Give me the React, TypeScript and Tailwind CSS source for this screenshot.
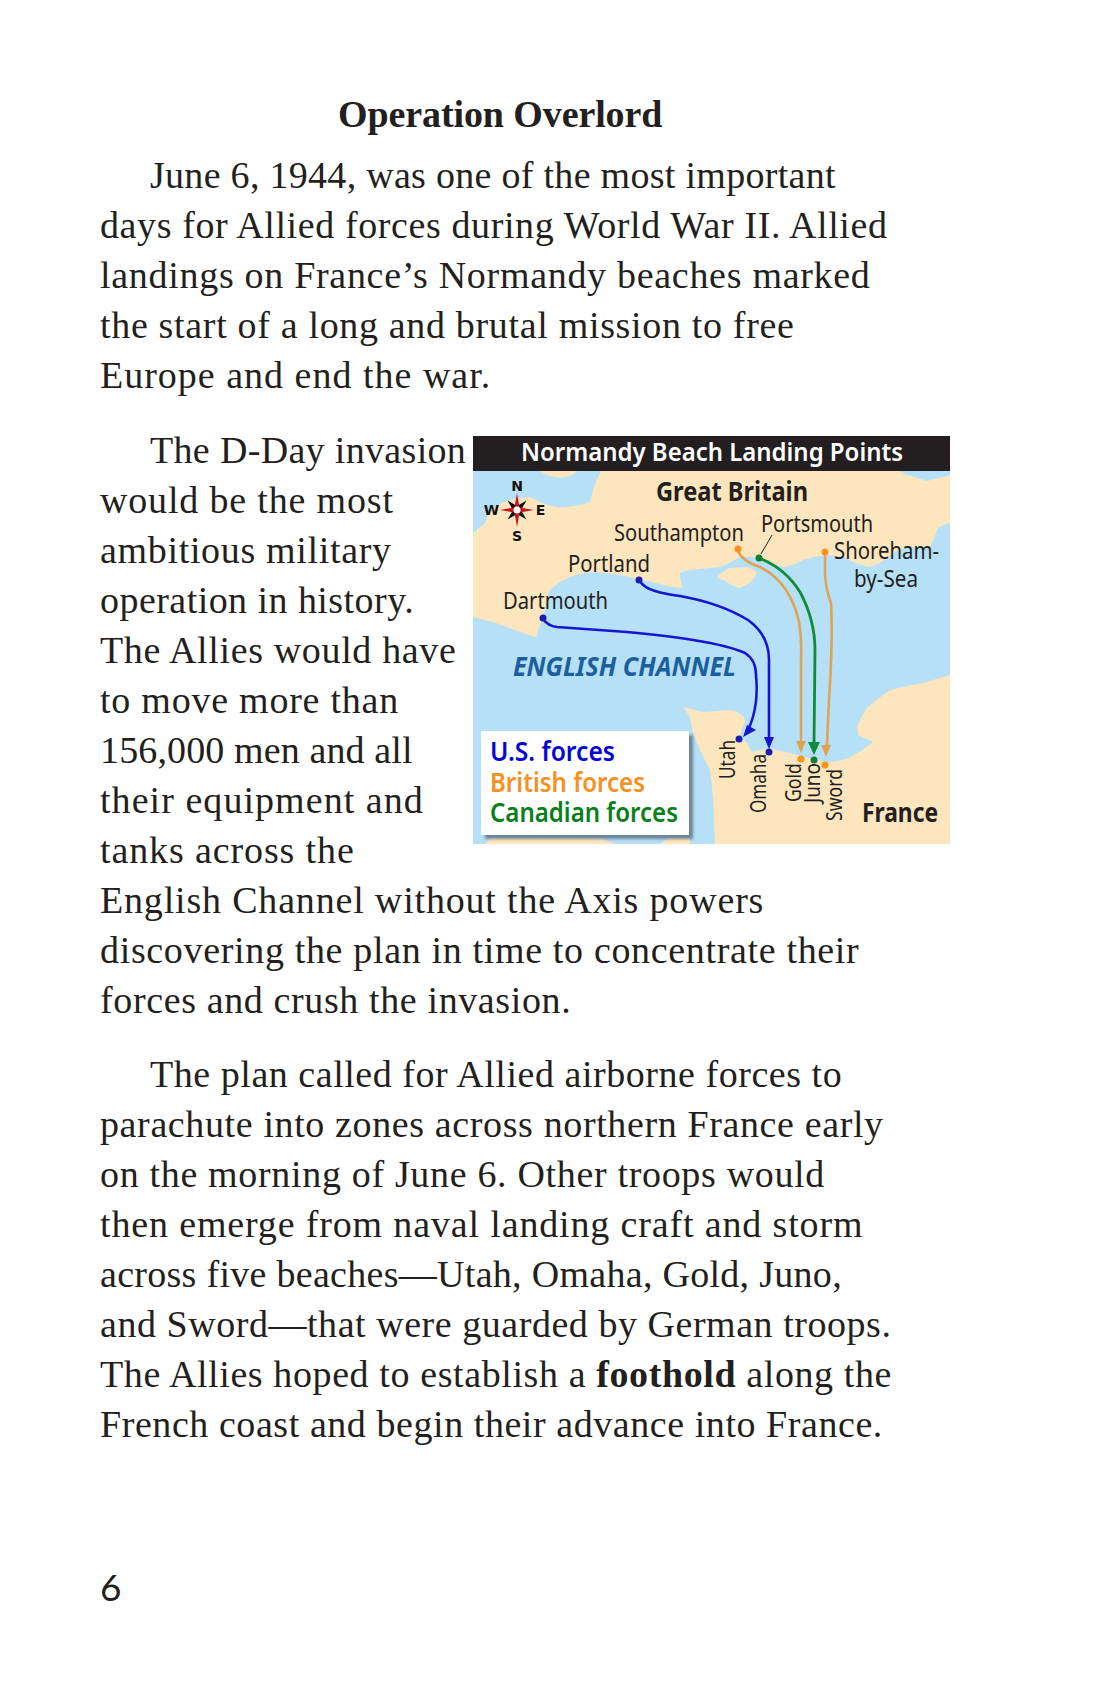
import React from "react";

const L = ({ children, c = "" }: { children: React.ReactNode; c?: string }) => (
  <div className={"whitespace-nowrap " + c}>{children}</div>
);

const sans = "'Noto Sans', sans-serif";

function T({ x, y, w, s, t, f = "#231f20", b = 400, i = false, r = false }: { x: number; y: number; w: number; s: number; t: string; f?: string; b?: number; i?: boolean; r?: boolean }) {
  return (
    <text
      x={r ? 0 : x}
      y={r ? 0 : y}
      transform={r ? `translate(${x} ${y}) rotate(-90)` : undefined}
      fontFamily={sans}
      fontSize={s}
      fontWeight={b}
      fontStyle={i ? "italic" : "normal"}
      fill={f}
      textLength={w}
      lengthAdjust="spacingAndGlyphs"
    >
      {t}
    </text>
  );
}

function Route({ d, c, w = 2.6 }: { d: string; c: string; w?: number }) {
  return <path d={d} fill="none" stroke={c} strokeWidth={w} strokeLinecap="round" />;
}

function MapFigure() {
  const land = "#fde5bd";
  const sea = "#b5e0f7";
  const blue = "#1616d0";
  const orange = "#dfa354";
  const green = "#118a3a";
  return (
    <svg width="477" height="408" viewBox="473 436 477 408" className="block shrink-0">
      <defs>
        <filter id="soft" x="-10%" y="-10%" width="120%" height="120%">
          <feGaussianBlur stdDeviation="0.6" />
        </filter>
        <filter id="sh" x="-10%" y="-10%" width="120%" height="120%">
          <feGaussianBlur stdDeviation="1.6" />
        </filter>
      </defs>
      <rect x="473" y="436" width="477" height="408" fill={sea} />
      <g filter="url(#soft)">
        <path
          fill={land}
          d="M473 533 L485 523 Q488 513 494 508 Q502 502 512 500 Q522 497 530 497 Q545 505 556 507 Q575 508 590 502 Q592 496 593 490 Q596 480 601 471 L900 471 L905 474 L927 481 L950 475 L950 523 Q940 525 937 530 Q934 540 930 547 Q912 546 897 550 Q885 562 870 567 Q855 564 843 557 L827 555 Q815 556 803 560 Q793 566 783 567 Q770 563 760 558 Q750 556 740 557 Q730 563 720 567 L700 569 Q684 570 680 573 Q680 582 683 588 Q668 587 656 583 Q648 581 640 580 Q630 577 620 575 Q605 572 590 572 Q580 573 570 577 Q558 582 550 590 Q546 600 545 610 Q540 625 536 637 Q530 636 523 633 L493 622 L473 617 Z"
        />
        <path fill={land} d="M717 577 Q724 570 730 568 L747 567 Q754 569 757 573 L753 580 Q747 585 740 588 Q732 586 727 582 Z" />
        <path fill={land} d="M540 471 L577 471 Q572 477 560 478 Q548 477 540 471 Z" />
        <path
          fill={land}
          d="M683 707 L703 712 L730 710 Q738 711 743 716 Q745 720 745 722 Q741 730 740 737 L747 743 Q749 748 752 752 Q760 750 770 748 L797 755 L827 762 Q840 762 850 757 Q862 751 873 742 Q865 738 858 735 L857 728 Q860 718 867 708 Q878 698 890 690 Q905 686 923 683 L950 675 L950 844 L715 844 L713 797 L710 770 L700 750 L693 733 L690 717 Z"
        />
        <path fill={land} d="M485 844 L490 838 L600 838 L615 844 Z" />
        <path fill={land} d="M660 844 L668 838 L690 838 L690 844 Z" />
      </g>

      <rect x="473" y="436" width="477" height="35" fill="#231f20" />
      <T x={521} y={461} w={382} s={25} t="Normandy Beach Landing Points" f="#ffffff" b={600} />

      <T x={656} y={501} w={152} s={26} t="Great Britain" b={700} />
      <T x={614} y={541} w={130} s={24} t="Southampton" />
      <T x={761} y={532} w={112} s={24} t="Portsmouth" />
      <T x={834} y={559} w={105} s={24} t="Shoreham-" />
      <T x={854} y={587} w={64} s={24} t="by-Sea" />
      <T x={568} y={572} w={82} s={24} t="Portland" />
      <T x={503} y={609} w={105} s={24} t="Dartmouth" />
      <T x={513} y={676} w={223} s={26} t="ENGLISH CHANNEL" f="#1c5f9f" b={700} i />

      {/* compass */}
      <g>
        <path d="M507.5 500.5 L517 506 L526.5 500.5 L521 510 L526.5 519.5 L517 514 L507.5 519.5 L513 510 Z" fill="#111111" />
        <path d="M517 493 L519.5 507.5 L534 510 L519.5 512.5 L517 527 L514.5 512.5 L500 510 L514.5 507.5 Z" fill="#c8141c" />
        <circle cx="517" cy="510" r="3.5" fill="#ffffff" />
        <text x="517" y="491" textAnchor="middle" fontFamily="'DejaVu Sans', sans-serif" fontWeight="700" fontSize="14" fill="#111">N</text>
        <text x="491.5" y="515" textAnchor="middle" fontFamily="'DejaVu Sans', sans-serif" fontWeight="700" fontSize="14" fill="#111">W</text>
        <text x="540.5" y="515" textAnchor="middle" fontFamily="'DejaVu Sans', sans-serif" fontWeight="700" fontSize="14" fill="#111">E</text>
        <text x="517" y="541" textAnchor="middle" fontFamily="'DejaVu Sans', sans-serif" fontWeight="700" fontSize="14" fill="#111">S</text>
      </g>

      {/* routes */}
      <Route d="M543 619 Q548 626 557 627 L627 632 Q670 636 693 640 Q730 646 745 653 Q756 660 756 675 Q759 705 749 728" c={blue} />
      <path d="M743 737 L756 730 L747 725 Z" fill={blue} />
      <Route d="M639 580 Q644 588 655 591 Q665 594 680 596 Q720 603 748 620 Q769 635 769 660 L769 740" c={blue} />
      <path d="M769 749 L764 737 L774 737 Z" fill={blue} />
      <Route d="M738 551 Q742 561 760 567 Q790 582 799 622 Q802 640 801 660 L801 745" c={orange} />
      <path d="M801 753 L796 741 L806 741 Z" fill={orange} />
      <Route d="M759 558 Q785 568 800 592 Q815 620 815 650 L814 745" c={green} w={2.8} />
      <path d="M814 755 L808 742 L820 742 Z" fill={green} />
      <Route d="M825 556 L825 575 Q826 590 831 603 Q833 640 829 700 L827 745" c={orange} />
      <path d="M826 757 L821 745 L831 745 Z" fill={orange} />
      <path d="M761 554 L772 535" stroke="#231f20" strokeWidth="1" fill="none" />

      <circle cx="543" cy="618" r="3.5" fill="#1c1cb0" />
      <circle cx="639" cy="580" r="3.5" fill="#1c1cb0" />
      <circle cx="739" cy="739" r="3.5" fill="#1c1cb0" />
      <circle cx="769" cy="752" r="3.5" fill="#1c1cb0" />
      <circle cx="738" cy="549" r="3.5" fill="#f7941d" />
      <circle cx="825" cy="552" r="3.5" fill="#f7941d" />
      <circle cx="801" cy="759" r="3.5" fill="#f7941d" />
      <circle cx="825" cy="765" r="3.5" fill="#f7941d" />
      <circle cx="759" cy="558" r="3.5" fill="#0f7f30" />
      <circle cx="814" cy="760" r="3.5" fill="#0f7f30" />

      <T x={735} y={779} w={39} s={22} t="Utah" r />
      <T x={766} y={813} w={59} s={22} t="Omaha" r />
      <T x={801} y={802} w={39} s={22} t="Gold" r />
      <T x={820} y={803} w={40} s={22} t="Juno" r />
      <T x={842} y={821} w={52} s={22} t="Sword" r />
      <T x={862} y={822} w={76} s={26} t="France" b={700} />

      {/* legend */}
      <rect x="485" y="735" width="208" height="104" fill="#5f7486" opacity="0.85" filter="url(#sh)" />
      <rect x="481" y="731" width="208" height="104" fill="#ffffff" />
      <T x={490} y={761} w={125} s={27} t="U.S. forces" f="#0505d8" b={600} />
      <T x={490} y={792} w={155} s={27} t="British forces" f="#f7901e" b={600} />
      <T x={490} y={822} w={188} s={27} t="Canadian forces" f="#08801a" b={600} />
    </svg>
  );
}

export default function App() {
  return (
    <div className="min-h-[1700px] w-[1100px] bg-white pl-[100px] pt-[88px] font-['Liberation_Serif',serif] text-[38px] leading-[50px] text-[#231f20]">
      <h1 className="ml-[238px] mb-[11px] mt-[1px] whitespace-nowrap text-[38px] font-bold leading-[50px] tracking-[-0.1px]">Operation Overlord</h1>

      <div className="mb-[25px]">
        <L c="pl-[50px] tracking-[0.29px]">June 6, 1944, was one of the most important</L>
        <L c="tracking-[0.6px]">days for Allied forces during World War II. Allied</L>
        <L c="tracking-[0.7px]">landings on France’s Normandy beaches marked</L>
        <L c="tracking-[0.67px]">the start of a long and brutal mission to free</L>
        <L c="tracking-[1px]">Europe and end the war.</L>
      </div>

      <div className="mb-[24px]">
        <div className="flex items-start">
          <div className="w-[373px] shrink-0">
            <L c="pl-[50px] tracking-[0.33px]">The D-Day invasion</L>
            <L c="tracking-[0.83px]">would be the most</L>
            <L c="tracking-[0.67px]">ambitious military</L>
            <L c="tracking-[0.45px]">operation in history.</L>
            <L c="tracking-[0.64px]">The Allies would have</L>
            <L c="tracking-[0.76px]">to move more than</L>
            <L c="tracking-[0.13px]">156,000 men and all</L>
            <L c="tracking-[1.05px]">their equipment and</L>
            <L c="tracking-[0.88px]">tanks across the</L>
          </div>
          <div className="mt-[11px]">
            <MapFigure />
          </div>
        </div>
        <L c="tracking-[0.82px]">English Channel without the Axis powers</L>
        <L c="tracking-[0.66px]">discovering the plan in time to concentrate their</L>
        <L c="tracking-[0.62px]">forces and crush the invasion.</L>
      </div>

      <div>
        <L c="pl-[50px] tracking-[0.54px]">The plan called for Allied airborne forces to</L>
        <L c="tracking-[0.62px]">parachute into zones across northern France early</L>
        <L c="tracking-[0.67px]">on the morning of June 6. Other troops would</L>
        <L c="tracking-[0.85px]">then emerge from naval landing craft and storm</L>
        <L c="tracking-[0.29px]">across five beaches—Utah, Omaha, Gold, Juno,</L>
        <L c="tracking-[0.54px]">and Sword—that were guarded by German troops.</L>
        <L c="tracking-[0.6px]">
          The Allies hoped to establish a <b>foothold</b> along the
        </L>
        <L c="tracking-[0.56px]">French coast and begin their advance into France.</L>
      </div>

      <div className="mt-[113px] font-['Lato',sans-serif] text-[37px] font-normal leading-[50px]">6</div>
    </div>
  );
}
